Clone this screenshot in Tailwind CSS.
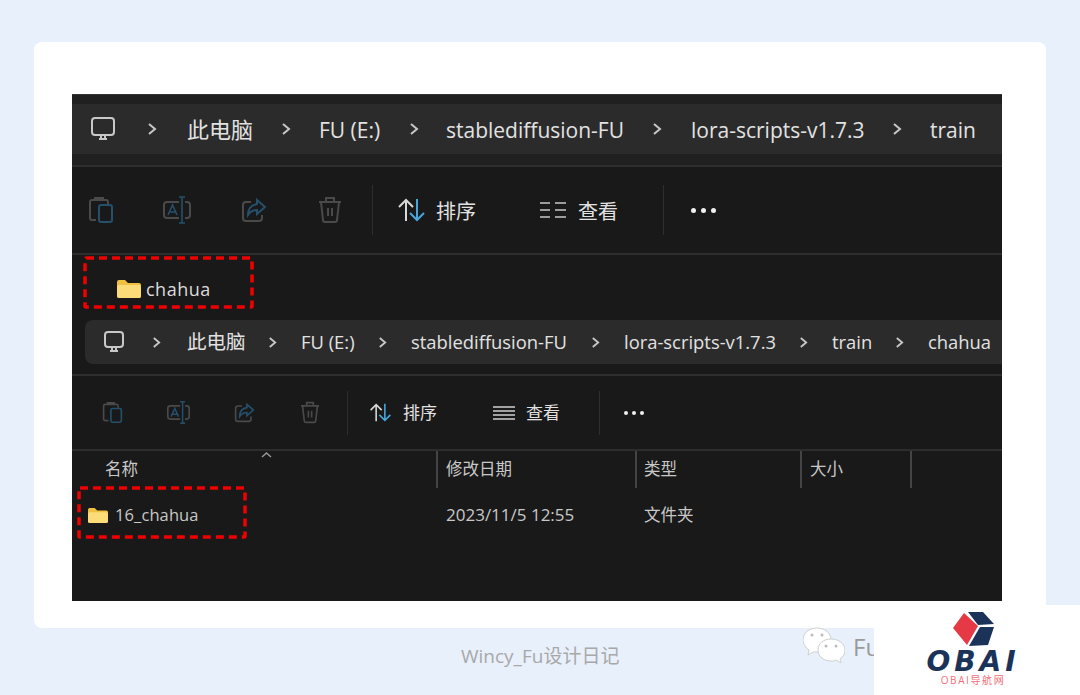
<!DOCTYPE html>
<html lang="zh-CN">
<head>
  <meta charset="UTF-8" />
  <title>Wincy_Fu</title>
  <script src="https://cdn.jsdelivr.net/npm/@tailwindcss/browser@4"></script>
</head>
<body class="bg-[#e8f0fc] font-['Open_Sans','Noto_Sans_CJK_SC',sans-serif] overflow-hidden">
  <div class="relative w-[1080px] h-[695px] overflow-hidden pt-[42px]">

    <!-- Card -->
    <div class="mx-[34px] w-[1012px] h-[586px] bg-white rounded-lg pt-[52px] pl-[38px]">
      <div class="w-[930px] h-[507px] bg-[#191919] text-[#e2e2e2] overflow-hidden">

        <!-- First explorer: address bar -->
        <div class="h-[71px] bg-[#202020] pt-[9px] border-t border-[#333]">
          <div class="h-[50px] bg-[#2b2b2b] flex items-center text-[21px] pl-[18px]">
            <svg class="w-[26px] h-[26px]" viewBox="0 0 26 26" fill="none" stroke="#c8c8c8" stroke-width="2"><rect x="2" y="2" width="22" height="17" rx="3"/><path d="M9 23h8M11 20v2M15 20v2"/></svg>
            <svg class="w-[10px] h-[14px] ml-[31px]" viewBox="0 0 10 14" fill="none" stroke="#c8c8c8" stroke-width="2"><path d="M2 2l6 5-6 5"/></svg>
            <span class="ml-[30px] w-[67px] text-[22px] whitespace-nowrap">此电脑</span>
            <svg class="w-[10px] h-[14px] ml-[27px]" viewBox="0 0 10 14" fill="none" stroke="#c8c8c8" stroke-width="2"><path d="M2 2l6 5-6 5"/></svg>
            <span class="ml-[28px] mt-[3px] w-[61px] whitespace-nowrap">FU (E:)</span>
            <svg class="w-[10px] h-[14px] ml-[29px]" viewBox="0 0 10 14" fill="none" stroke="#c8c8c8" stroke-width="2"><path d="M2 2l6 5-6 5"/></svg>
            <span class="ml-[27px] mt-[3px] w-[178px] whitespace-nowrap">stablediffusion-FU</span>
            <svg class="w-[10px] h-[14px] ml-[28px]" viewBox="0 0 10 14" fill="none" stroke="#c8c8c8" stroke-width="2"><path d="M2 2l6 5-6 5"/></svg>
            <span class="ml-[29px] mt-[3px] w-[173px] whitespace-nowrap">lora-scripts-v1.7.3</span>
            <svg class="w-[10px] h-[14px] ml-[28px]" viewBox="0 0 10 14" fill="none" stroke="#c8c8c8" stroke-width="2"><path d="M2 2l6 5-6 5"/></svg>
            <span class="ml-[28px] mt-[3px]">train</span>
          </div>
        </div>

        <!-- First explorer: toolbar -->
        <div class="h-[90px] border-y-2 border-[#2e2e2e] flex items-center text-[20px]">
          <svg class="w-[26px] h-[28px] ml-[16px]" viewBox="0 0 26 28" fill="none" stroke-width="2"><path d="M8 24H4a2 2 0 0 1-2-2V6a2 2 0 0 1 2-2h14a2 2 0 0 1 2 2v2M7 4V2h8v2" stroke="#4a4a4a"/><rect x="11" y="9" width="13" height="17" rx="2" stroke="#24506c"/></svg>
          <svg class="w-[28px] h-[28px] ml-[49px]" viewBox="0 0 28 28" fill="none" stroke-width="2"><path d="M16 6H4a3 3 0 0 0-3 3v10a3 3 0 0 0 3 3h12M22 6h2a3 3 0 0 1 3 3v10a3 3 0 0 1-3 3h-2" stroke="#4a4a4a"/><path d="M16 1h6M19 1v26M16 27h6M5 19l4.500-10 4.500 10M6.500 16h6" stroke="#24506c" stroke-width="1.600"/></svg>
          <svg class="w-[26px] h-[26px] ml-[50px]" viewBox="0 0 26 26" fill="none" stroke-width="2"><path d="M10 5H5a3 3 0 0 0-3 3v13a3 3 0 0 0 3 3h13a3 3 0 0 0 3-3v-3" stroke="#4a4a4a"/><path d="M16 3l8 7-8 7v-4c-5 0-7 2-9 5 0-6 3-10 9-11z" stroke="#24506c"/></svg>
          <svg class="w-[24px] h-[28px] ml-[51px]" viewBox="0 0 24 28" fill="none" stroke="#4a4a4a" stroke-width="2"><path d="M1 6h22M8 6V2h8v4M3 6l2 18a2 2 0 0 0 2 2h10a2 2 0 0 0 2-2l2-18M10 12v8M14 12v8"/></svg>
          <div class="w-px h-[50px] bg-[#2e2e2e] ml-[30px]"></div>
          <svg class="w-[27px] h-[24px] ml-[25px]" viewBox="0 0 27 24" fill="none" stroke-width="2"><path d="M8 23V2M1 9l7-7 7 7" stroke="#d8d8d8"/><path d="M19 1v21M12 15l7 7 7-7" stroke="#45a7dc"/></svg>
          <span class="ml-[11px] mt-[3px] w-[40px] whitespace-nowrap">排序</span>
          <svg class="w-[26px] h-[18px] ml-[64px]" viewBox="0 0 26 18" fill="none" stroke="#c8c8c8" stroke-width="1.600"><path d="M0 2h10M0 9h10M0 16h10M15 2h11M15 9h11M15 16h11"/></svg>
          <span class="ml-[12px] mt-[3px] w-[40px] whitespace-nowrap">查看</span>
          <div class="w-px h-[50px] bg-[#2e2e2e] ml-[45px]"></div>
          <div class="ml-[27px] flex gap-[5px]">
            <span class="w-[5px] h-[5px] rounded-full bg-[#f0f0f0]"></span>
            <span class="w-[5px] h-[5px] rounded-full bg-[#f0f0f0]"></span>
            <span class="w-[5px] h-[5px] rounded-full bg-[#f0f0f0]"></span>
          </div>
        </div>

        <!-- First explorer: folder row -->
        <div class="h-[65px] pl-[11px] pt-[1px]">
          <div class="relative w-[171px] h-[53px] flex items-center pl-[34px] pt-[13px]">
            <svg class="absolute inset-0 w-[171px] h-[53px]" viewBox="0 0 171 53" fill="none"><rect x="2" y="2" width="167" height="49" rx="1" stroke="#f00000" stroke-width="3.500" stroke-dasharray="8 5"/></svg>
            <svg class="w-[24px] h-[20px]" viewBox="0 0 24 20"><path d="M0 3a2 2 0 0 1 2-2h6l3 3h11a2 2 0 0 1 2 2v11a2 2 0 0 1-2 2H2a2 2 0 0 1-2-2z" fill="#f0c040"/><rect x="0" y="6" width="24" height="13" rx="2" fill="#fbdc78"/></svg>
            <span class="ml-[5px] text-[18px] tracking-[0.5px] text-[#dcdcdc]">chahua</span>
          </div>
        </div>

        <!-- Second explorer: address bar -->
        <div class="ml-[13px] h-[44px] bg-[#2b2b2b] rounded-l-lg flex items-center text-[18.400px] pl-[18px]">
          <svg class="w-[22px] h-[22px]" viewBox="0 0 22 22" fill="none" stroke="#c8c8c8" stroke-width="2"><rect x="2" y="1" width="18" height="15" rx="3"/><path d="M7 20h8M9 17v2M13 17v2"/></svg>
          <svg class="w-[9px] h-[13px] ml-[27px]" viewBox="0 0 10 14" fill="none" stroke="#c8c8c8" stroke-width="2"><path d="M2 2l6 5-6 5"/></svg>
          <span class="ml-[26px] w-[58px] text-[19.500px] whitespace-nowrap">此电脑</span>
          <svg class="w-[9px] h-[13px] ml-[23px]" viewBox="0 0 10 14" fill="none" stroke="#c8c8c8" stroke-width="2"><path d="M2 2l6 5-6 5"/></svg>
          <span class="ml-[24px] w-[53px] whitespace-nowrap">FU (E:)</span>
          <svg class="w-[9px] h-[13px] ml-[24px]" viewBox="0 0 10 14" fill="none" stroke="#c8c8c8" stroke-width="2"><path d="M2 2l6 5-6 5"/></svg>
          <span class="ml-[24px] w-[156px] whitespace-nowrap">stablediffusion-FU</span>
          <svg class="w-[9px] h-[13px] ml-[24px]" viewBox="0 0 10 14" fill="none" stroke="#c8c8c8" stroke-width="2"><path d="M2 2l6 5-6 5"/></svg>
          <span class="ml-[24px] w-[151px] whitespace-nowrap">lora-scripts-v1.7.3</span>
          <svg class="w-[9px] h-[13px] ml-[24px]" viewBox="0 0 10 14" fill="none" stroke="#c8c8c8" stroke-width="2"><path d="M2 2l6 5-6 5"/></svg>
          <span class="ml-[24px] w-[39px]">train</span>
          <svg class="w-[9px] h-[13px] ml-[24px]" viewBox="0 0 10 14" fill="none" stroke="#c8c8c8" stroke-width="2"><path d="M2 2l6 5-6 5"/></svg>
          <span class="ml-[24px]">chahua</span>
        </div>

        <!-- Second explorer: toolbar -->
        <div class="mt-[10px] h-[77px] border-y-2 border-[#2e2e2e] flex items-center text-[17px]">
          <svg class="w-[21px] h-[23px] ml-[30px]" viewBox="0 0 26 28" fill="none" stroke-width="2"><path d="M8 24H4a2 2 0 0 1-2-2V6a2 2 0 0 1 2-2h14a2 2 0 0 1 2 2v2M7 4V2h8v2" stroke="#4a4a4a"/><rect x="11" y="9" width="13" height="17" rx="2" stroke="#24506c"/></svg>
          <svg class="w-[23px] h-[23px] ml-[44px]" viewBox="0 0 28 28" fill="none" stroke-width="2"><path d="M16 6H4a3 3 0 0 0-3 3v10a3 3 0 0 0 3 3h12M22 6h2a3 3 0 0 1 3 3v10a3 3 0 0 1-3 3h-2" stroke="#4a4a4a"/><path d="M16 1h6M19 1v26M16 27h6M5 19l4.500-10 4.500 10M6.500 16h6" stroke="#24506c" stroke-width="1.800"/></svg>
          <svg class="w-[21px] h-[21px] ml-[44px]" viewBox="0 0 26 26" fill="none" stroke-width="2"><path d="M10 5H5a3 3 0 0 0-3 3v13a3 3 0 0 0 3 3h13a3 3 0 0 0 3-3v-3" stroke="#4a4a4a"/><path d="M16 3l8 7-8 7v-4c-5 0-7 2-9 5 0-6 3-10 9-11z" stroke="#24506c"/></svg>
          <svg class="w-[20px] h-[23px] ml-[45px]" viewBox="0 0 24 28" fill="none" stroke="#4a4a4a" stroke-width="2"><path d="M1 6h22M8 6V2h8v4M3 6l2 18a2 2 0 0 0 2 2h10a2 2 0 0 0 2-2l2-18M10 12v8M14 12v8"/></svg>
          <div class="w-px h-[44px] bg-[#2e2e2e] ml-[27px]"></div>
          <svg class="w-[23px] h-[19px] ml-[21px]" viewBox="0 0 27 24" fill="none" stroke-width="2"><path d="M8 23V2M1 9l7-7 7 7" stroke="#d8d8d8"/><path d="M19 1v21M12 15l7 7 7-7" stroke="#45a7dc"/></svg>
          <span class="ml-[11px] w-[35px] whitespace-nowrap">排序</span>
          <svg class="w-[22px] h-[14px] ml-[55px]" viewBox="0 0 22 14" fill="none" stroke="#d0d0d0" stroke-width="1.500"><path d="M0 1h22M0 5h22M0 9h22M0 13h22"/></svg>
          <span class="ml-[11px] w-[34px] whitespace-nowrap">查看</span>
          <div class="w-px h-[44px] bg-[#2e2e2e] ml-[39px]"></div>
          <div class="ml-[24px] flex gap-[4px]">
            <span class="w-[4px] h-[4px] rounded-full bg-[#f0f0f0]"></span>
            <span class="w-[4px] h-[4px] rounded-full bg-[#f0f0f0]"></span>
            <span class="w-[4px] h-[4px] rounded-full bg-[#f0f0f0]"></span>
          </div>
        </div>

        <!-- Column headers -->
        <div class="relative h-[37px] flex text-[16.500px] text-[#c8c8c8]">
          <svg class="absolute left-[189px] top-[1px] w-[11px] h-[6px]" viewBox="0 0 11 6" fill="none" stroke="#999" stroke-width="1.500"><path d="M1 5l4.500-4 4.500 4"/></svg>
          <div class="w-[366px] h-[37px] border-r-2 border-[#444] pl-[33px] pb-[1px] flex items-center">名称</div>
          <div class="w-[199px] h-[37px] border-r-2 border-[#444] pl-[8px] pb-[1px] flex items-center">修改日期</div>
          <div class="w-[165px] h-[37px] border-r-2 border-[#444] pl-[7px] pb-[1px] flex items-center">类型</div>
          <div class="w-[110px] h-[37px] border-r-2 border-[#444] pl-[8px] pb-[1px] flex items-center">大小</div>
        </div>

        <!-- File row -->
        <div class="-mt-[2px] flex text-[16.500px] text-[#c8c8c8] pl-[5px]">
          <div class="w-[369px] h-[52px]">
            <div class="relative w-[170px] h-[53px] flex items-center pl-[11px] pt-[6px]">
              <svg class="absolute inset-0 w-[170px] h-[53px]" viewBox="0 0 170 53" fill="none"><rect x="2" y="2" width="166" height="49" rx="1" stroke="#f00000" stroke-width="3.500" stroke-dasharray="8 5"/></svg>
              <svg class="w-[20px] h-[17px]" viewBox="0 0 24 20"><path d="M0 3a2 2 0 0 1 2-2h6l3 3h11a2 2 0 0 1 2 2v11a2 2 0 0 1-2 2H2a2 2 0 0 1-2-2z" fill="#f0c040"/><rect x="0" y="6" width="24" height="13" rx="2" fill="#fbdc78"/></svg>
              <span class="ml-[7px] tracking-[0.1px] whitespace-nowrap">16_chahua</span>
            </div>
          </div>
          <div class="w-[198px] flex items-center h-[52px] pt-[6px] text-[17px] whitespace-nowrap">2023/11/5 12:55</div>
          <div class="flex items-center h-[52px] pt-[6px] whitespace-nowrap">文件夹</div>
        </div>
      </div>
    </div>

    <!-- Footer -->
    <div class="relative h-[67px] flex items-start text-[19px] text-[#a8a8a8]">
      <span class="ml-[461px] mt-[14px] leading-[28px] w-[157px] whitespace-nowrap">Wincy_Fu设计日记</span>
      <svg class="ml-[185px] -mt-[1px] w-[42px] h-[36px]" viewBox="0 0 42 36"><path d="M14 1c8 0 14 5 14 12 0 7-6 12-14 12-2 0-3 0-4 0l-5 3 1-5C3 21 0 17 0 13 0 6 6 1 14 1z" fill="#fff" stroke="#cfcfcf"/><path d="M28 12c8 0 14 5 14 11 0 4-2 7-5 9l1 4-5-3c-2 1-3 1-5 1-8 0-13-5-13-11s5-11 13-11z" fill="#fff" stroke="#cfcfcf"/><circle cx="9" cy="8" r="1.500" fill="#bbb"/><circle cx="19" cy="8" r="1.500" fill="#bbb"/><circle cx="23" cy="19" r="1.500" fill="#bbb"/><circle cx="33" cy="19" r="1.500" fill="#bbb"/></svg>
      <span class="ml-[8px] mt-[4px] leading-[30px] text-[24px] text-[#9a9a9a]">Fu</span>
    </div>

    <!-- Watermark logo over the corner -->
    <div class="absolute left-[874px] top-[605px] w-[206px] h-[90px] bg-white flex flex-col items-center pr-[8px]">
      <svg class="mt-[5px] w-[45px] h-[38px]" viewBox="950 610 45 38"><path d="M952 628L963 613L977 626L966 645z" fill="#e63946"/><path d="M967 612H982L993 624L977 625z" fill="#1b3358"/><path d="M979 627H993L987 645L968 646z" fill="#1b3358"/></svg>
      <div class="mt-[2px] text-[28px] leading-[24px] font-bold italic tracking-[4px] text-[#1b3358] font-['DejaVu_Sans']">OBAI</div>
      <div class="text-[10px] leading-[12px] tracking-[1.600px] text-[#ef6f78]">OBAI导航网</div>
    </div>
  </div>
</body>
</html>
